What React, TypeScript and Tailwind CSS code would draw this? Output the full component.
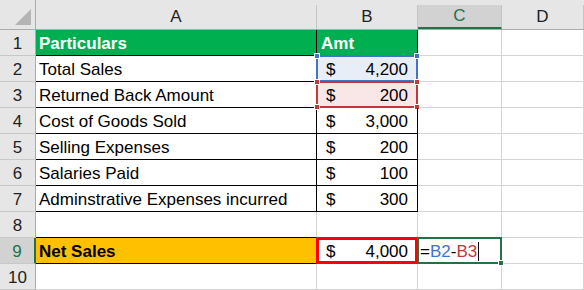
import React from 'react'

const gray = 'border-[#d4d4d4]'

// dollar amount cell content
function Money({ value }: { value: string }) {
  return (
    <div className="flex w-full justify-between px-[9px]">
      <span>$</span>
      <span>{value}</span>
    </div>
  )
}

function Handle({ pos, color }: { pos: string; color: string }) {
  return <div className={`absolute h-[6px] w-[6px] border border-white ${color} ${pos}`} />
}

const rows = [
  { label: 'Total Sales', amt: '4,200' },
  { label: 'Returned Back Amount', amt: '200' },
  { label: 'Cost of Goods Sold', amt: '3,000' },
  { label: 'Selling Expenses', amt: '200' },
  { label: 'Salaries Paid', amt: '100' },
  { label: 'Adminstrative Expenses incurred', amt: '300' },
]

function RowHead({ n, active }: { n: number; active?: boolean }) {
  return (
    <div
      className={`flex items-end justify-center border-b border-[#c8c8c8] ${
        active
          ? 'bg-[#d2d2d2] text-[#217346] border-r-2 border-r-[#217346]'
          : 'bg-[#e6e6e6] text-[#222] border-r border-r-[#ababab]'
      }`}
    >
      {n}
    </div>
  )
}

export default function App() {
  return (
    <div
      className="grid h-[290px] w-[584px] grid-cols-[36px_281px_101px_84px_82px] grid-rows-[30px_repeat(10,26px)] overflow-hidden bg-white text-[17px] leading-[22px] text-black"
      style={{ fontFamily: '"Liberation Sans", Arial, sans-serif' }}
    >
      {/* column headers */}
      <div className="flex items-end bg-[#e6e6e6] border-b border-r border-[#ababab]">
        <div className="relative h-[24px] w-full">
          <div className="absolute bottom-[4px] right-[4px] h-0 w-0 border-b-[16px] border-l-[16px] border-b-[#b4b4b4] border-l-transparent" />
        </div>
      </div>
      {['A', 'B', 'C', 'D'].map((c) => (
        <div key={c} className="flex items-end bg-[#e6e6e6] border-b border-[#ababab]">
          <div
            className={`flex h-[24px] w-full items-center justify-center border-r border-[#c4c4c4] ${
              c === 'C' ? 'bg-[#d2d2d2] text-[#217346] border-b-2 border-b-[#217346]' : 'text-[#222]'
            }`}
          >
            {c}
          </div>
        </div>
      ))}

      {/* row 1 */}
      <RowHead n={1} />
      <div className="flex items-end pl-[3px] bg-[#00b050] font-bold text-white border-r border-b border-black">
        Particulars
      </div>
      <div className="flex items-end pl-[4px] bg-[#00b050] font-bold text-white border-r border-b border-black">
        Amt
      </div>
      <div className={`border-r border-b ${gray}`} />
      <div className={`border-r border-b ${gray}`} />

      {/* rows 2-7 */}
      {rows.map((r, i) => (
        <React.Fragment key={r.label}>
          <RowHead n={i + 2} />
          <div className="flex items-end pl-[3px] border-r border-b border-black">{r.label}</div>
          <div
            className={`relative flex items-end border-r border-b border-black ${
              i === 0 ? 'bg-[#e8eef8]' : i === 1 ? 'bg-[#f9e7e8]' : ''
            }`}
          >
            <Money value={r.amt} />
            {i === 0 && (
              <div className="absolute -left-[1px] -top-[1px] -right-[1px] -bottom-[1px] border-2 border-[#4472c4]">
                <Handle pos="-left-[4px] -top-[4px]" color="bg-[#4472c4]" />
                <Handle pos="-right-[4px] -top-[4px]" color="bg-[#4472c4]" />
              </div>
            )}
            {i === 1 && (
              <div className="absolute -left-[1px] -top-[1px] -right-[1px] -bottom-[1px] border-2 border-[#c0393b]">
                <Handle pos="-left-[4px] -top-[4px]" color="bg-[#c0393b]" />
                <Handle pos="-right-[4px] -top-[4px]" color="bg-[#c0393b]" />
                <Handle pos="-left-[4px] -bottom-[4px]" color="bg-[#c0393b]" />
                <Handle pos="-right-[4px] -bottom-[4px]" color="bg-[#c0393b]" />
              </div>
            )}
          </div>
          <div className={`border-r border-b ${gray}`} />
          <div className={`border-r border-b ${gray}`} />
        </React.Fragment>
      ))}

      {/* row 8 */}
      <RowHead n={8} />
      <div className="border-r border-b border-r-[#d4d4d4] border-b-black" />
      <div className={`border-r border-b ${gray}`} />
      <div className={`border-r border-b ${gray}`} />
      <div className={`border-r border-b ${gray}`} />

      {/* row 9 */}
      <RowHead n={9} active />
      <div className="flex items-end pl-[3px] bg-[#ffc000] font-bold border-r border-b border-black">
        Net Sales
      </div>
      <div className="relative flex items-end border-r border-b border-[#d4d4d4]">
        <Money value="4,000" />
        <div className="absolute -left-[1px] -top-[1px] -right-[1px] -bottom-[1px] border-[3px] border-[#ff0000]" />
      </div>
      <div className="relative flex items-end pl-[2px] border-r border-b border-[#d4d4d4]">
        <span>=</span>
        <span className="text-[#4472c4]">B2</span>
        <span>-</span>
        <span className="text-[#c0393b]">B3</span>
        <span className="ml-[1px] mb-[2px] h-[19px] w-[1px] bg-black" />
        <div className="absolute -left-[1px] -top-[1px] -right-[1px] -bottom-[1px] border-2 border-[#217346]">
          <div className="absolute -bottom-[4px] -right-[4px] h-[6px] w-[6px] border border-white bg-[#217346]" />
        </div>
      </div>
      <div className={`border-r border-b ${gray}`} />

      {/* row 10 */}
      <RowHead n={10} />
      <div className={`border-r border-b ${gray}`} />
      <div className={`border-r border-b ${gray}`} />
      <div className={`border-r border-b ${gray}`} />
      <div className={`border-r border-b ${gray}`} />
    </div>
  )
}
